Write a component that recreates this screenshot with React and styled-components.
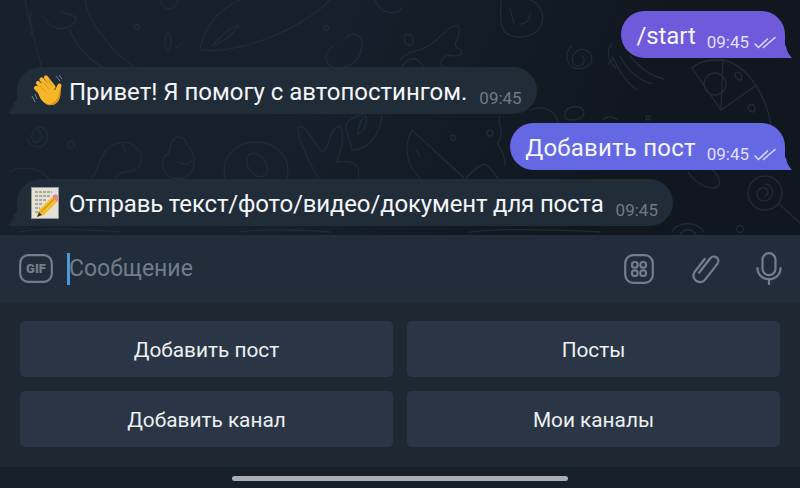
import styled, { createGlobalStyle } from "styled-components";

const GlobalStyle = createGlobalStyle`
  html, body {
    margin: 0;
    padding: 0;
    background: #17202a;
  }
  body {
    font-family: Roboto, "Noto Sans", "Liberation Sans", sans-serif;
  }
`;

const messages = [
  { id: 1, out: true, text: "/start", tone: "#6f5adb", spacing: -0.1 },
  { id: 2, text: "Привет! Я помогу с автопостингом.", icon: "wave", spacing: -0.02 },
  { id: 3, out: true, text: "Добавить пост", tone: "#6468e3", spacing: 0.2 },
  { id: 4, text: "Отправь текст/фото/видео/документ для поста", icon: "memo", spacing: -0.16 },
];

const keys = ["Добавить пост", "Посты", "Добавить канал", "Мои каналы"];

const WaveEmoji = () => (
  <svg width="32" height="33" viewBox="0 0 32 33">
    <path d="M5 13 C8 22 10 29 18 31 C26 32 30 25 29 19 L30.5 12 C30.5 9 27.5 9 26.5 11 L24 16 L12 8 Z" fill="#f5b62a" />
    <path d="M7 9 L16 18 M10.5 5.5 L19 15 M15 3.5 L22.5 13 M5 14 L13 22" stroke="#f5b62a" strokeWidth="4.2" strokeLinecap="round" />
    <path d="M9 12 L15 18 M12.5 8.5 L18 14.5 M17 6.5 L21 12" stroke="#d58d17" strokeWidth="0.8" strokeLinecap="round" />
    <path d="M15 30 C21 31 27 27 28 20 L29.5 13 C31 21 28 33 17 31 Z" fill="#dd8e16" />
    <path d="M1 22 L4 28 M4 20 L6 25 M25 2 L29 7 M28 1 L31 5" stroke="#76808b" strokeWidth="1" fill="none" />
  </svg>
);

const MemoEmoji = () => (
  <svg width="29" height="32" viewBox="0 0 29 32">
    <rect x="0.5" y="0.5" width="27" height="31" fill="#e4e1d6" stroke="#9a9a98" strokeWidth="0.8" />
    <path
      d="M4 5 H21 M4 9 H19 M4 13 H15 M4 17 H11 M4 21 H9 M4 25 H7"
      stroke="#66645f"
      strokeWidth="0.9"
      strokeDasharray="3 1"
    />
    <path d="M8 23 L21 10 L26 15 L13 28 L6 30 Z" fill="#f2c02c" />
    <path d="M10 25 L23 12" stroke="#d9941a" strokeWidth="1.5" />
    <path d="M21 10 L23.5 7.5 Q25.5 6.5 27.5 9.5 Q28.5 11.5 26 15 Z" fill="#e5848c" />
    <path d="M6 30 L8 25 L11 28 Z" fill="#3c3a38" />
  </svg>
);

const DoubleCheck = () => (
  <svg width="22" height="13" viewBox="0 0 22 13" fill="none" stroke="#dcd8f8" strokeWidth="1.6" strokeLinecap="round">
    <path d="M1 8 L4.5 11.5 L13.5 3" />
    <path d="M9.5 11.5 L21 1.5" />
  </svg>
);

const InTail = () => (
  <svg width="12" height="16" viewBox="0 0 12 16">
    <path d="M12 0 V16 H1 Q0 16 .6 15.2 Q5 11 6 4 Z" fill="#212c39" />
  </svg>
);

const OutTail = ({ color }) => (
  <svg width="12" height="16" viewBox="0 0 12 16">
    <path d="M0 0 V16 H11 Q12 16 11.4 15.2 Q7 11 6 4 Z" fill={color} />
  </svg>
);

const GifIcon = () => (
  <svg width="34" height="29" viewBox="0 0 34 29" fill="none">
    <rect x="1.2" y="1.2" width="31.6" height="26.6" rx="8" stroke="#717e8c" strokeWidth="2.2" />
    <text x="17" y="19" textAnchor="middle" fill="#717e8c" fontFamily="Roboto, sans-serif" fontSize="13" fontWeight="900">
      GIF
    </text>
  </svg>
);

const StickerIcon = () => (
  <svg width="30" height="30" viewBox="0 0 30 30" fill="none" stroke="#717e8c" strokeWidth="2.2">
    <rect x="1.2" y="1.2" width="27.6" height="27.6" rx="8" />
    <rect x="8" y="8" width="5.6" height="5.6" rx="2.4" />
    <rect x="16.4" y="8" width="5.6" height="5.6" rx="2.4" />
    <rect x="8" y="16.4" width="5.6" height="5.6" rx="2.4" />
    <rect x="16.4" y="16.4" width="5.6" height="5.6" rx="2.4" />
  </svg>
);

const ClipIcon = () => (
  <svg width="30" height="32" viewBox="0 0 30 32" fill="none" stroke="#717e8c" strokeWidth="2.3" strokeLinecap="round">
    <path d="M-6.5 -7 V9 a6.5 6.5 0 0 0 13 0 V-11 a4.5 4.5 0 0 0 -9 0 V7" transform="translate(15.5 15.5) rotate(38)" />
  </svg>
);

const MicIcon = () => (
  <svg width="26" height="33" viewBox="0 0 26 33" fill="none" stroke="#717e8c" strokeWidth="2.2" strokeLinecap="round">
    <rect x="6.5" y="1.2" width="13" height="22" rx="6.5" />
    <path d="M1.5 16 C1.5 31 24.5 31 24.5 16 M13 27 V32" />
  </svg>
);

// faint doodles behind the chat
const Doodles = () => (
  <DoodleLayer viewBox="0 0 800 235" fill="none" stroke="#202b38" strokeWidth="1.3" strokeLinecap="round">
    {/* top strip */}
    <path d="M25 0 C28 20 38 50 42 70 M32 12 C26 22 36 28 30 36" />
    <path d="M45 18 C50 32 72 32 77 18 C72 14 64 14 60 12" />
    <path d="M70 30 C78 50 92 62 105 68 M85 0 C88 20 105 45 135 68" />
    <path d="M160 0 C162 12 176 12 178 0" />
    <circle cx="137" cy="27" r="2.5" />
    <path d="M168 32 C164 38 164 48 168 50 C172 48 172 38 168 32 Z M175 48 L182 44" />
    <path d="M200 50 C204 24 222 8 240 0 M200 50 C240 54 300 30 330 0" />
    <path d="M213 45 C220 36 230 28 238 25 C234 34 224 42 213 45 Z" />
    <circle cx="326" cy="28" r="2.5" />
    <path d="M345 40 C350 30 362 34 362 44 C362 60 350 68 336 68 C324 66 322 52 334 46" />
    <path d="M375 0 C380 14 396 16 402 8" />
    {/* spiral row left */}
    <path d="M38 130 C44 134 42 142 36 142 C30 142 30 132 37 128 C45 124 50 136 46 143 C40 150 30 147 27 139" />
    <circle cx="71" cy="145" r="3.5" />
    <path d="M92 178 C100 168 100 150 115 144 C132 138 146 152 140 165 C134 175 122 168 115 178" />
    <path d="M122 143 L125 152" />
    <path d="M172 142 C176 134 186 136 187 146 C196 150 198 172 184 178 H172 C160 172 160 156 168 154 C170 150 170 146 172 142 Z" />
    <path d="M178 162 C184 166 190 164 192 160" />
    <ellipse cx="256" cy="170" rx="32" ry="28" />
    <ellipse cx="257" cy="165" rx="9" ry="13" transform="rotate(-35 257 165)" />
    <path d="M10 172 C18 166 40 166 50 180" />
    <path d="M298 128 C304 120 318 150 322 152 C330 150 328 128 340 126 C346 134 340 155 336 162 C352 160 362 164 358 178 M298 128 C298 140 308 160 318 178" />
    <path d="M346 125 C350 114 372 112 382 112 C382 132 370 150 352 150 C350 140 346 132 346 125 Z" />
    <path d="M358 134 C358 125 362 118 366 116 C368 122 364 132 358 134 Z" />
    <path d="M412 130 L464 178 M412 130 C404 145 405 165 420 178 M416 150 L420 156" />
    <circle cx="453" cy="138" r="2.5" />
    <circle cx="490" cy="133" r="3" />
    <path d="M500 116 C496 126 506 132 498 142 C498 150 506 152 505 165" />
    <path d="M466 178 C474 170 482 162 487 165 L498 178" />
    {/* upper middle */}
    <path d="M400 60 C408 50 420 52 428 46 C440 40 448 24 458 26 C464 34 450 44 458 48 C466 52 462 58 448 55 C440 58 438 66 446 68" />
    <path d="M405 35 C410 32 416 38 412 44 C408 48 402 42 405 35 Z" />
    <path d="M402 66 C410 56 418 56 424 68" />
    <path d="M501 0 C500 16 500 28 506 33 C516 40 534 38 541 26 C546 14 540 4 530 0" />
    <path d="M510 8 L514 24 M520 24 C526 24 530 20 530 14" />
    <path d="M582 56 C586 60 584 66 578 66 C572 66 570 58 576 52 C582 46 590 50 592 58 C592 66 584 70 574 68 C566 64 564 52 572 46" />
    <path d="M612 44 C606 50 608 62 616 68" />
    <path d="M612 56 C618 68 626 84 638 90 M620 56 C628 72 640 80 652 84 M630 56 C640 68 650 76 664 79 M608 64 L614 58" />
    {/* pizza */}
    <path d="M692 68 C700 60 712 60 724 60 C748 66 768 96 772 132" />
    <path d="M692 68 L721 110 L755 86" />
    <path d="M723 60 L721 110" />
    <circle cx="715" cy="84" r="11" />
    <path d="M735 74 C738 70 744 74 741 80 C737 80 735 78 735 74 Z M748 106 C752 102 757 106 754 112 C750 112 748 110 748 106 Z" />
    <path d="M530 110 C544 104 556 112 558 122 M565 112 C570 105 582 105 584 112 C584 120 570 122 565 118 Z" />
    <path d="M603 120 C606 116 614 116 617 120" />
    <circle cx="648" cy="118" r="2" />
    {/* lower right */}
    <path d="M688 172 C696 184 712 192 718 186 C722 180 716 172 712 170" />
    <circle cx="765" cy="193" r="17" />
    <path d="M765 184 C774 184 776 198 766 201 C756 202 754 190 762 188 C768 187 770 194 765 196" />
    <path d="M779 204 L800 223" />
    <path d="M672 232 C676 222 696 220 704 232 M680 235 C684 228 692 228 696 235" />
    <circle cx="740" cy="229" r="3.5" />
    <path d="M20 232 C50 226 90 230 120 232 M240 232 C270 228 300 230 330 232 M470 232 C500 228 560 230 600 232" />
  </DoodleLayer>
);

const App = () => {
  return (
    <Screen>
      <GlobalStyle />
      <ChatArea>
        <Doodles />
        {messages.map((m) =>
          m.out ? (
            <OutBubble key={m.id} $tone={m.tone}>
              <MessageText $spacing={m.spacing}>{m.text}</MessageText>
              <OutMeta>
                09:45
                <DoubleCheck />
              </OutMeta>
              <TailRight>
                <OutTail color={m.tone} />
              </TailRight>
            </OutBubble>
          ) : (
            <InBubble key={m.id}>
              <EmojiSlot>{m.icon === "wave" ? <WaveEmoji /> : <MemoEmoji />}</EmojiSlot>
              <MessageText $spacing={m.spacing}>{m.text}</MessageText>
              <InMeta>09:45</InMeta>
              <TailLeft>
                <InTail />
              </TailLeft>
            </InBubble>
          )
        )}
      </ChatArea>
      <InputBar>
        <GifIcon />
        <InputField>
          <Caret />
          Сообщение
        </InputField>
        <InputActions>
          <StickerIcon />
          <ClipIcon />
          <MicIcon />
        </InputActions>
      </InputBar>
      <Keyboard>
        {keys.map((k) => (
          <KeyButton key={k}>{k}</KeyButton>
        ))}
      </Keyboard>
      <NavBar>
        <HomeIndicator />
      </NavBar>
    </Screen>
  );
};

export default App;

const Screen = styled.div`
  width: 800px;
  height: 488px;
  display: flex;
  flex-direction: column;
  overflow: hidden;
`;

const ChatArea = styled.div`
  position: relative;
  height: 235px;
  box-sizing: border-box;
  padding: 11px 15px 0 17px;
  display: flex;
  flex-direction: column;
  gap: 9px;
  background: linear-gradient(115deg, #16212d 0%, #15202c 40%, #10171f 75%, #10171f 100%);
`;

const DoodleLayer = styled.svg`
  position: absolute;
  inset: 0;
  width: 800px;
  height: 235px;
`;

const Bubble = styled.div`
  position: relative;
  height: 47px;
  box-sizing: border-box;
  display: flex;
  align-items: center;
  flex-shrink: 0;
  color: #f4f5f7;
`;

const OutBubble = styled(Bubble)`
  align-self: flex-end;
  padding: 0 9px 0 15px;
  background: ${(p) => p.$tone};
  border-radius: 24px 24px 6px 24px;
`;

const InBubble = styled(Bubble)`
  align-self: flex-start;
  padding: 0 15px 0 14px;
  background: #212c39;
  border-radius: 24px 24px 24px 6px;
`;

const MessageText = styled.span`
  font-size: 24px;
  line-height: 32px;
  letter-spacing: ${(p) => p.$spacing}px;
  margin-top: 2px;
  white-space: nowrap;
`;

const EmojiSlot = styled.span`
  display: flex;
  width: 38px;
  flex-shrink: 0;
`;

const OutMeta = styled.span`
  display: flex;
  align-items: center;
  gap: 5px;
  margin: 15px 0 0 11px;
  font-size: 17px;
  color: #e2dffa;
`;

const InMeta = styled.span`
  margin: 15px 0 0 12px;
  font-size: 17px;
  color: #6f7b89;
`;

const TailLeft = styled.span`
  position: absolute;
  left: -9px;
  bottom: 0;
  display: flex;
`;

const TailRight = styled.span`
  position: absolute;
  right: -7px;
  bottom: 0;
  display: flex;
`;

const InputBar = styled.div`
  height: 67px;
  box-sizing: border-box;
  display: flex;
  align-items: center;
  padding: 0 18px 0 19px;
  background: #212d3b;
`;

const InputField = styled.div`
  flex: 1;
  display: flex;
  align-items: center;
  margin-left: 14px;
  font-size: 23px;
  color: #6f7d8c;
`;

const Caret = styled.span`
  width: 3px;
  height: 32px;
  background: #4d9ad8;
  margin-right: -1px;
`;

const InputActions = styled.div`
  display: flex;
  align-items: center;
  gap: 36px;
`;

const Keyboard = styled.div`
  height: 165px;
  box-sizing: border-box;
  display: grid;
  grid-template-columns: 373px 373px;
  grid-auto-rows: 56px;
  gap: 14px;
  padding: 19px 20px 0;
  background: #1e2833;
`;

const KeyButton = styled.div`
  display: flex;
  align-items: center;
  justify-content: center;
  padding-top: 1px;
  background: #2a3645;
  border-radius: 5px;
  font-size: 20.8px;
  color: #eef0f2;
`;

const NavBar = styled.div`
  flex: 1;
  display: flex;
  justify-content: center;
  padding-top: 9px;
  background: #17202a;
`;

const HomeIndicator = styled.div`
  width: 336px;
  height: 5px;
  border-radius: 3px;
  background: #a9adb2;
`;
